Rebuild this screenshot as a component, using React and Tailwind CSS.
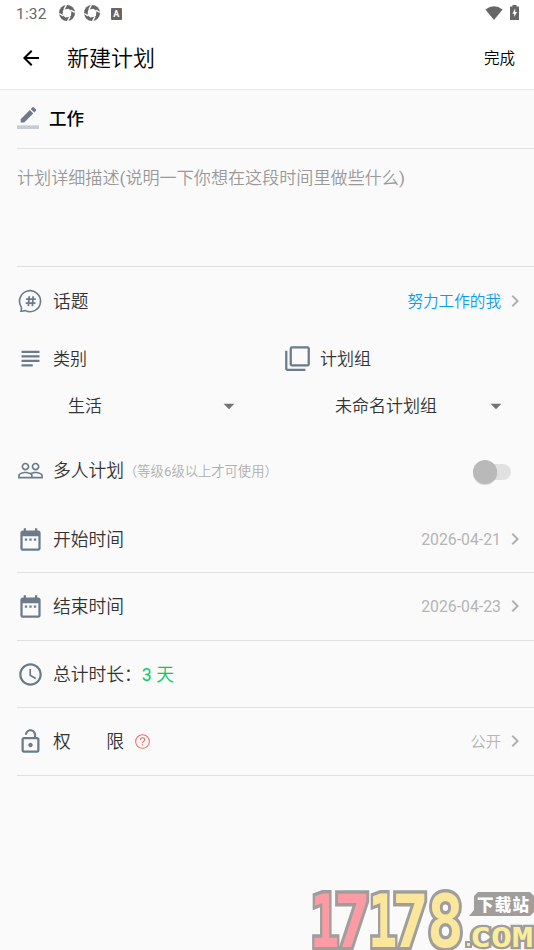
import {
  MdAccessTime,
  MdArrowBack,
  MdArrowDropDown,
  MdChevronRight,
  MdDateRange,
  MdFilterNone,
  MdLockOpen,
  MdPeopleOutline,
  MdSubject,
} from "react-icons/md";

const iconClass = "w-[27px] h-[27px] shrink-0 text-[#6b7b8c]";

export default function App() {
  return (
    <div className="relative w-full h-[950px] overflow-hidden bg-[#fafafa] text-[#333] font-['Roboto','Noto_Sans_CJK_SC_DemiLight','Noto_Sans_CJK_SC',sans-serif]">
      <StatusBar />
      <header className="flex items-center h-[62px] px-[19px] bg-white border-b border-[#e8e8e8] text-black">
        <MdArrowBack className="-mt-0.5 w-6 h-6" />
        <h1 className="ml-6 text-[22px] leading-none">新建计划</h1>
        <button className="ml-auto pt-0.5 text-[15.5px] leading-none">
          完成
        </button>
      </header>
      <main className="pl-[17px]">
        <div className="flex items-center h-[59px] border-b border-[#e0e0e0]">
          <PencilIcon />
          <span className="ml-2.5 font-['Roboto','Noto_Sans_CJK_SC',sans-serif] text-[17.5px] font-medium text-black">
            工作
          </span>
        </div>
        <div className="h-[118px] pt-4 border-b border-[#e0e0e0] text-[17.1px] leading-[27px] text-[#999] whitespace-nowrap">
          计划详细描述(说明一下你想在这段时间里做些什么)
        </div>
        <Row
          icon={<TopicIcon />}
          label="话题"
          className="h-[68px]"
          value={
            <span className="relative top-px text-[15.6px] text-[#0a9cf0]">
              努力工作的我
            </span>
          }
        />
        <div className="flex h-[102px]">
          <Picker
            icon={<MdSubject className={iconClass} />}
            label="类别"
            value="生活"
          />
          <Picker
            icon={<MdFilterNone className={iconClass} />}
            label="计划组"
            value="未命名计划组"
          />
        </div>
        <div className="flex items-center h-[67px] mb-px pr-[23px]">
          <MdPeopleOutline className={iconClass} />
          <span className="ml-[9px] pt-px text-[17.75px]">多人计划</span>
          <span className="pt-[3px] text-[13.3px] text-[#b0b0b0] whitespace-nowrap">
            （等级6级以上才可使用）
          </span>
          <Switch />
        </div>
        <Row
          icon={<MdDateRange className={iconClass} />}
          label="开始时间"
          className="h-[68px] pt-px border-b"
          value="2026-04-21"
        />
        <Row
          icon={<MdDateRange className={iconClass} />}
          label="结束时间"
          className="h-[68px] border-b"
          value="2026-04-23"
        />
        <div className="flex items-center h-[67px] border-b border-[#e0e0e0] text-[17.75px]">
          <MdAccessTime className={iconClass} />
          <span className="ml-[9px] pt-0.5">总计时长：</span>
          <span className="pt-0.5 text-[#0dc866]">3 天</span>
        </div>
        <Row
          icon={<MdLockOpen className={iconClass} />}
          label="权　　限"
          className="h-[68px] border-b"
          extra={<HelpIcon />}
          value={<span className="text-[15.3px]">公开</span>}
        />
      </main>
      <Watermark />
    </div>
  );
}

const StatusBar = () => (
  <div className="flex items-center h-7 pl-4 pr-[15px] bg-white text-[#666]">
    <span className="pt-0.5 text-[15.5px] leading-none tracking-[0.2px]">
      1:32
    </span>
    <Aperture className="ml-3" />
    <Aperture className="ml-[9px]" />
    <span className="flex items-center justify-center ml-[11px] w-[11px] h-3 rounded-[1px] bg-[#666] text-white text-[9px] font-bold leading-none">
      A
    </span>
    <svg viewBox="0 0 18 14" className="-mt-0.5 ml-auto w-[18px] h-[14px]">
      <path d="M.4 3.6Q9-3 17.6 3.6L9 14z" fill="currentColor" />
    </svg>
    <svg viewBox="0 0 9 15" className="-mt-1 ml-[7px] w-[9px] h-[15px]">
      <path d="M2.5 0h4v1.5H9V15H0V1.5h2.5z" fill="currentColor" />
      <path d="M5.2 3.2 2.4 8.8h1.8V12l2.8-5H5.2z" fill="#fff" />
    </svg>
  </div>
);

// thick ring cut by four narrow gaps
const Aperture = ({ className }) => (
  <svg viewBox="0 0 16 16" className={"-mt-0.5 w-4 h-4 " + className}>
    <circle cx="8" cy="8" r="8" fill="currentColor" />
    <path
      d="M4.6 4.6 9.6 3.8 12.4 6.2 12 10.6 10.8 11.8 6.2 12.4 3.6 9.8 4 5.8z"
      fill="#fff"
    />
    <path
      d="M5 4.4 7.4 0M11.6 5l4.1 2.4M11 11.6l-2.4 4.4M4.4 11 .3 8.6"
      stroke="#fff"
      strokeWidth="1.4"
    />
  </svg>
);

const Row = ({ icon, label, value, extra, className }) => (
  <div className={"flex items-center pr-[7px] border-[#e0e0e0] " + className}>
    {icon}
    <span className="ml-[9px] pt-0.5 text-[17.75px]">{label}</span>
    {extra}
    <span className="ml-auto pt-px text-[15.8px] text-[#b5b5b5]">{value}</span>
    <MdChevronRight className="-mt-px ml-0.5 w-6 h-6 text-[#b0b0b0]" />
  </div>
);

const Picker = ({ icon, label, value }) => (
  <div className="w-[267px] shrink-0">
    <div className="flex items-center h-[47px]">
      {icon}
      <span className="ml-[9px] pt-0.5 text-[17px]">{label}</span>
    </div>
    <div className="flex items-center h-[47px] pl-[51px] pr-[42px]">
      <span className="pt-0.5 text-[17px]">{value}</span>
      <MdArrowDropDown className="ml-auto w-[26px] h-[26px] text-[#737373]" />
    </div>
  </div>
);

const Switch = () => (
  <div className="flex items-center ml-auto mt-[3px] w-[38px] h-6">
    <div className="w-6 h-6 shrink-0 z-10 rounded-full bg-[#b9b9b9] shadow-[0_1px_1px_rgba(0,0,0,0.15)]" />
    <div className="-ml-3 w-[26px] h-4 rounded-r-full bg-[#e1e1e1]" />
  </div>
);

const PencilIcon = () => (
  <svg viewBox="0 0 24 24" className="-mt-0.5 w-[22px] h-[22px] text-[#6b7b8c]">
    <path
      fill="currentColor"
      d="M17.75 7 14 3.25l-10 10V17h3.75l10-10zm2.96-2.96c.39-.39.39-1.02 0-1.41L18.37.29a.996.996 0 0 0-1.41 0L15 2.25 18.75 6l1.96-1.96z"
    />
    <path fill="currentColor" fillOpacity=".36" d="M0 20h24v4H0z" />
  </svg>
);

const TopicIcon = () => (
  <svg viewBox="0 0 27 27" className={iconClass} fill="none" stroke="currentColor">
    <path
      strokeWidth="1.6"
      d="M4.3 19A10.5 10.5 0 1 1 8.4 22.6Q6.4 23.4 4 23.3 4.9 21 4.3 19z"
    />
    <path
      strokeWidth="1.8"
      d="M12.2 8.3l-.8 9.8M16.2 8.3l-.8 9.8M9 11.2h9.8M8.7 15.2h9.8"
    />
  </svg>
);

const HelpIcon = () => (
  <svg viewBox="0 0 16 16" className="ml-[11px] w-[15px] h-[15px]" fill="none" stroke="#ee6a62">
    <circle cx="8" cy="8" r="7.3" strokeWidth="1.1" />
    <path d="M5.8 6.3c0-3 4.5-2.8 4.5-.2 0 1.7-2.3 1.7-2.3 3.5" strokeWidth="1.1" />
    <path d="M8 11v1.3" strokeWidth="1.2" />
  </svg>
);

// x, horizontal squeeze, fill of each big digit
const digits = [
  ["1", 0, 0.67, "#fc9ba3"],
  ["7", 24, 0.84, "#fc9ba3"],
  ["1", 58, 0.67, "#fbe79b"],
  ["7", 82, 0.84, "#fbe79b"],
  ["8", 117, 0.84, "#fbe79b"],
];

const Watermark = () => (
  <div className="absolute right-0 bottom-0 w-[224px] h-[62px]">
    <svg viewBox="0 0 224 62" className="w-full h-full">
      <g
        fontFamily="DejaVu Sans Mono"
        fontWeight="bold"
        stroke="#a09e9c"
        strokeLinejoin="miter"
        paintOrder="stroke"
      >
        {digits.map(([char, x, squeeze, fill], i) => (
          <text
            key={i}
            transform={`translate(${x} 58.5) scale(${squeeze} 1)`}
            fontSize="73"
            strokeWidth="7"
            fill={fill}
          >
            {char}
          </text>
        ))}
        <path d="M157 55h3v3h-3z" fill="#fbee9b" strokeWidth="4" />
        <text
          x="160"
          y="58.5"
          fontSize="26"
          textLength="63"
          lengthAdjust="spacingAndGlyphs"
          strokeWidth="4.5"
          fill="#fbee9b"
        >
          COM
        </text>
      </g>
      <path d="M168 4h52l4 4v16l-4 4h-61l5-6V8z" fill="#a09e9c" />
      <text
        x="167"
        y="22.5"
        fontSize="16.5"
        fontWeight="900"
        fontFamily="Noto Sans CJK SC"
        fill="#fff"
        textLength="52"
      >
        下载站
      </text>
    </svg>
  </div>
);
